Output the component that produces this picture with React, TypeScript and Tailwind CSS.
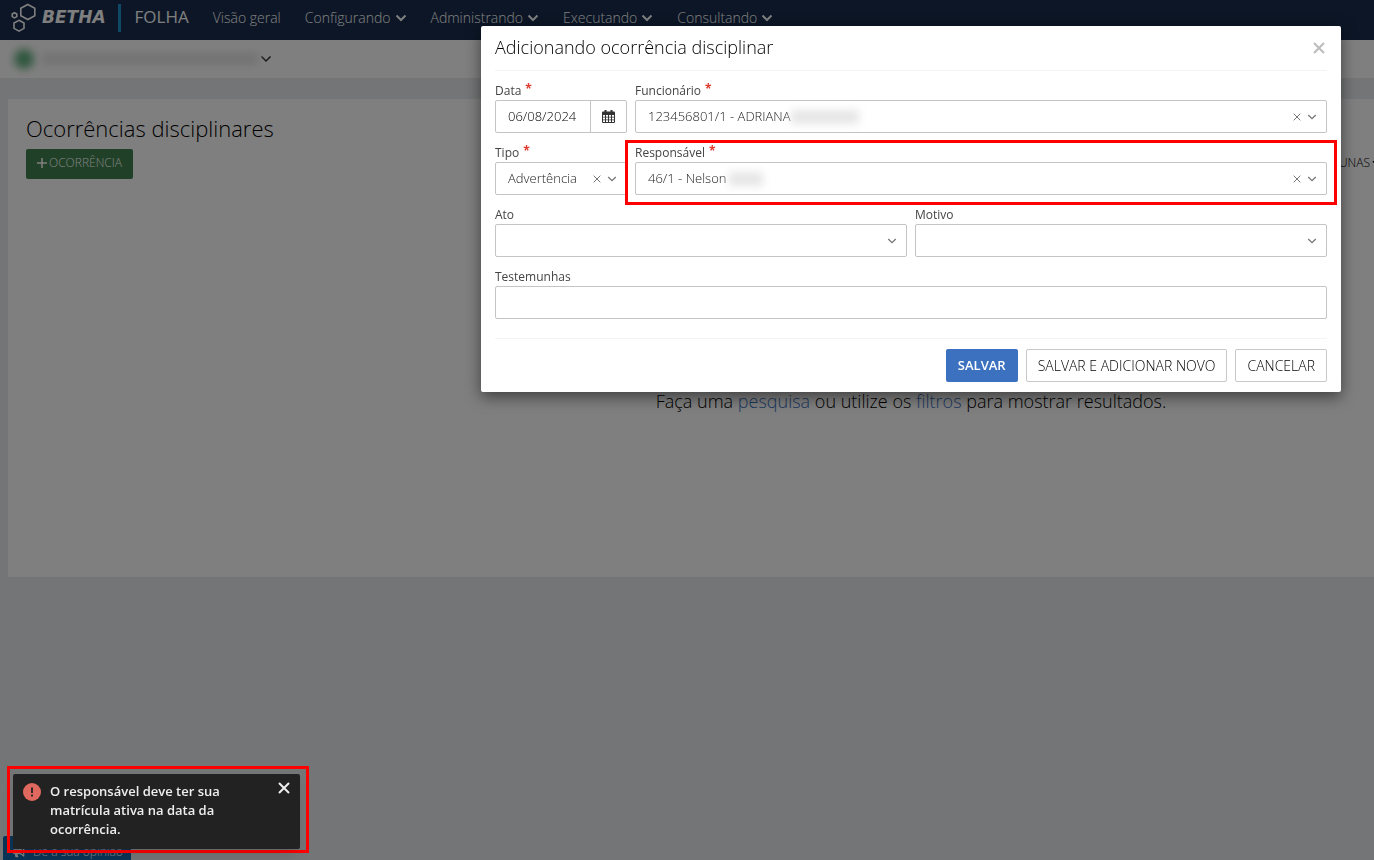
import React from 'react';
import { FaBullhorn } from 'react-icons/fa';

interface MenuItem {
    label: string;
    hasMenu: boolean;
}

const MENU: MenuItem[] = [
    { label: 'Visão geral', hasMenu: false },
    { label: 'Configurando', hasMenu: true },
    { label: 'Administrando', hasMenu: true },
    { label: 'Executando', hasMenu: true },
    { label: 'Consultando', hasMenu: true },
];

function Chevron({ className, weight = 2 }: { className: string; weight?: number }) {
    return (
        <svg viewBox="0 0 12 8" className={className} fill="none" stroke="currentColor" strokeWidth={weight}>
            <path d="M1.5 1.5 6 6l4.500-4.500" />
        </svg>
    );
}

function Cross({ className, weight = 2 }: { className: string; weight?: number }) {
    return (
        <svg viewBox="0 0 12 12" className={className} fill="none" stroke="currentColor" strokeWidth={weight}>
            <path d="M1 1l10 10M11 1 1 11" />
        </svg>
    );
}

function Label({ htmlFor, children, required }: { htmlFor: string; children: React.ReactNode; required?: boolean }) {
    return (
        <label htmlFor={htmlFor} className="flex h-5 items-center gap-1 pt-0.5 text-xs font-medium text-[#444]">
            {children}
            {required && <span className="-mt-1 leading-3 font-bold text-[#e0392d]">*</span>}
        </label>
    );
}

interface SelectFieldProps {
    id: string;
    label: string;
    value?: string;
    required?: boolean;
    children?: React.ReactNode;
}

function SelectField({ id, label, value, required, children }: SelectFieldProps) {
    return (
        <div className="min-w-0">
            <Label htmlFor={id} required={required}>{label}</Label>
            <div className="relative">
                <select
                    id={id}
                    className="block h-[33px] w-full appearance-none rounded-xs border border-[#c4c4c4] bg-white px-3 text-[13px] font-light text-[#222]"
                >
                    <option>{value}</option>
                </select>
                {children}
                <div className="pointer-events-none absolute inset-y-0 right-2.5 flex items-center gap-1.5 pt-px text-[#777]">
                    {value && (
                        <button type="button" aria-label="Limpar" className="pointer-events-auto">
                            <Cross className="size-2" weight={1.5} />
                        </button>
                    )}
                    <Chevron className="h-2 w-2.5" weight={1.6} />
                </div>
            </div>
        </div>
    );
}

function Header() {
    return (
        <header className="flex h-10 items-center overflow-hidden bg-[#182c4c] pb-1 pl-2.5 text-white">
            <svg viewBox="0 0 28 30" className="h-[30px] w-7 shrink-0" fill="none" stroke="currentColor" strokeWidth="1.600">
                <path d="M17.800 1.500l7 3.800v7.400l-7 3.800-7-3.800V5.300z" />
                <path d="M9 17.300l5 2.700v5.400L9 28.200l-5-2.800V20z" />
                <path d="M4.500 9.700l2.300 1.300v2.600l-2.300 1.300-2.300-1.300V11z" />
            </svg>
            <span className="ml-1 font-['DejaVu_Sans',sans-serif] text-[17px] font-bold italic">BETHA</span>
            <span className="ml-3 h-7 w-[3px] bg-[#1f93cf]"></span>
            <span className="ml-3.5 pb-0.5 text-[17px]">FOLHA</span>
            <nav className="ml-6 flex gap-6 text-sm font-light">
                {MENU.map((item) => (
                    <a key={item.label} href="#" className="flex items-center gap-1 whitespace-nowrap">
                        {item.label}
                        {item.hasMenu && <Chevron className="h-2 w-3" />}
                    </a>
                ))}
            </nav>
        </header>
    );
}

function OccurrenceDialog() {
    return (
        <form
            role="dialog"
            aria-labelledby="dialog-title"
            className="absolute top-[26px] right-[33px] w-[860px] max-w-full rounded-xs bg-white px-3.5 pb-2.5 shadow-[0_5px_15px_rgba(0,0,0,0.5)]"
        >
            <div className="flex h-[45px] items-center justify-between border-b border-[#f4f4f8]">
                <h2 id="dialog-title" className="pb-0.5 text-lg font-light text-black">Adicionando ocorrência disciplinar</h2>
                <button type="button" aria-label="Fechar" className="text-[#bbb]">
                    <Cross className="mr-0.5 size-3" />
                </button>
            </div>
            <div className="flex flex-col gap-[9px] pt-[9px] pb-[19px]">
                <div className="grid grid-cols-[132px_1fr] gap-2">
                    <div>
                        <Label htmlFor="data" required>Data</Label>
                        <div className="flex h-[33px] rounded-xs border border-[#c4c4c4] text-[13px] font-light text-black">
                            <input id="data" defaultValue="06/08/2024" className="w-full min-w-0 px-3" />
                            <button type="button" aria-label="Abrir calendário" className="flex w-9 shrink-0 items-center justify-center border-l border-[#c4c4c4] text-[#333]">
                                <svg viewBox="0 0 13 13" className="size-[13px]" fill="currentColor">
                                    <path d="M0 2.500Q0 1.500 1 1.500h11q1 0 1 1V12q0 1-1 1H1q-1 0-1-1z M2.500 0h2v3h-2z M8.500 0h2v3h-2z" />
                                    <path fill="#fff" d="M1 5h2v1.800H1zM4 5h2v1.800H4zM7 5h2v1.800H7zM10 5h2v1.800h-2zM1 7.600h2v1.800H1zM4 7.600h2v1.800H4zM7 7.600h2v1.800H7zM10 7.600h2v1.800h-2zM1 10.200h2V12H1zM4 10.200h2V12H4zM7 10.200h2V12H7zM10 10.200h2V12h-2z" />
                                </svg>
                            </button>
                        </div>
                    </div>
                    <SelectField id="funcionario" label="Funcionário" value="123456801/1 - ADRIANA" required>
                        <span className="absolute top-2.5 left-[156px] h-3.5 w-[68px] bg-[#e6e6e6] blur-xs"></span>
                    </SelectField>
                </div>
                <div className="relative grid grid-cols-[132px_1fr] gap-2">
                    <SelectField id="tipo" label="Tipo" value="Advertência" required />
                    <SelectField id="responsavel" label="Responsável" value="46/1 - Nelson" required>
                        <span className="absolute top-2.5 left-[94px] h-3.5 w-[34px] bg-[#e6e6e6] blur-xs"></span>
                    </SelectField>
                    <div className="pointer-events-none absolute -top-0.5 -right-2.5 -bottom-2.5 left-[130px] border-3 border-[#f00]"></div>
                </div>
                <div className="grid grid-cols-2 gap-2">
                    <SelectField id="ato" label="Ato" />
                    <SelectField id="motivo" label="Motivo" />
                </div>
                <div>
                    <Label htmlFor="testemunhas">Testemunhas</Label>
                    <input id="testemunhas" className="block h-[33px] w-full rounded-xs border border-[#c4c4c4] px-3 text-[13px]" />
                </div>
            </div>
            <div className="flex justify-end gap-2 border-t border-[#f4f4f8] pt-2.5 text-sm font-light text-black">
                <button type="submit" className="h-[33px] rounded-xs bg-[#3b71bf] px-3 text-[13px] font-semibold text-white">SALVAR</button>
                <button type="button" className="h-[33px] rounded-xs border border-[#c8c8c8] px-[11px]">SALVAR E ADICIONAR NOVO</button>
                <button type="button" className="h-[33px] rounded-xs border border-[#c8c8c8] px-[11px]">CANCELAR</button>
            </div>
        </form>
    );
}

function Toast() {
    return (
        <div className="fixed bottom-[7px] left-[7px] w-[302px] border-3 border-[#f00] pt-[5px] pr-1.5 pb-px pl-[3px]">
            <div role="alert" className="flex h-[75px] rounded-xs bg-[#222] px-2.5 pt-2 text-[#eee] shadow-lg">
                <svg viewBox="0 0 18 18" className="mt-px size-[18px] shrink-0">
                    <circle cx="9" cy="9" r="9" fill="#e0695f" />
                    <path d="M9 4.500v5.500M9 11.500v2" stroke="#222" strokeWidth="1.800" />
                </svg>
                <p className="ml-[9px] flex-1 pr-12 text-[13px] leading-[19px] font-semibold">
                    O responsável deve ter sua matrícula ativa na data da ocorrência.
                </p>
                <button type="button" aria-label="Fechar aviso" className="self-start">
                    <Cross className="size-3" />
                </button>
            </div>
        </div>
    );
}

export default function App() {
    return (
        <div className="relative min-h-screen overflow-hidden bg-[#e8eaed] font-['Open_Sans',sans-serif]">
            <Header />
            <div className="flex h-[38px] items-center bg-white pl-3.5">
                <span className="size-5 rounded-full bg-[#5fae7d] blur-xs"></span>
                <span className="ml-2 h-3 w-[216px] bg-[#e6e6e6] blur-xs"></span>
                <button type="button" aria-label="Trocar entidade" className="ml-0.5">
                    <Chevron className="h-2 w-3 text-[#333]" weight={1.5} />
                </button>
            </div>
            <main className="mt-[21px] ml-2 h-[478px] bg-white px-[18px] pt-4">
                <h1 className="text-[22px] leading-[26px] font-light text-black">Ocorrências disciplinares</h1>
                <div className="mt-2 flex items-start justify-between">
                    <button type="button" className="flex h-[30px] items-center gap-0.5 rounded-xs bg-[#40824f] px-[11px] pb-0.5 text-xs font-light text-white">
                        <svg viewBox="0 0 10 10" className="size-2.5" stroke="currentColor" strokeWidth="1.500">
                            <path d="M5 0v10M0 5h10" />
                        </svg>
                        OCORRÊNCIA
                    </button>
                    <button type="button" className="-mr-6 flex h-7 items-center gap-0.5 text-xs font-light text-black">
                        COLUNAS
                        <Chevron className="h-1.5 w-2" />
                    </button>
                </div>
                <p className="mt-[208px] pl-[440px] text-center text-lg font-light text-black">
                    Faça uma <a href="#" className="text-[#3b71bf]">pesquisa</a> ou utilize os{' '}
                    <a href="#" className="text-[#3b71bf]">filtros</a> para mostrar resultados.
                </p>
            </main>
            <button type="button" className="fixed -bottom-2 left-[3px] flex h-8 w-32 items-center gap-2 rounded-xs bg-[#1468ad] px-2.5 text-xs font-light text-white">
                <FaBullhorn className="size-3 shrink-0" />
                <span className="whitespace-nowrap">Dê a sua opinião</span>
            </button>
            <div className="fixed inset-0 bg-black/50"></div>
            <OccurrenceDialog />
            <Toast />
        </div>
    );
}
